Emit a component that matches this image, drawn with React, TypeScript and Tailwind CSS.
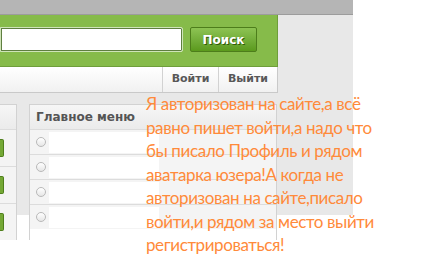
import React from 'react';

const lines = [
    'Я авторизован на сайте,а всё',
    'равно пишет войти,а надо что',
    'бы писало Профиль и рядом',
    'аватарка юзера!А когда не',
    'авторизован на сайте,писало',
    'войти,и рядом за место выйти',
    'регистрироваться!',
];

const MenuRow = () => (
    <div className="flex h-[25px] items-center border-t border-[#dcdcdc] bg-[#f4f4f4] pl-[6px]">
        <span className="h-[10px] w-[10px] shrink-0 rounded-full border border-[#b9b9b9] bg-gradient-to-b from-white to-[#e6e6e6]" />
        <span className="ml-[3px] h-[21px] w-[110px] bg-white" />
    </div>
);

const LeftRow = () => (
    <div className="flex h-[37px] items-center border-t border-[#dcdcdc] bg-[#f4f4f4]">
        <span className="h-[18px] w-[4px] rounded-r-[2px] border border-l-0 border-[#4f7f1c] bg-[#74a835]" />
    </div>
);

const App = () => {
    return (
        <div className="relative h-[265px] w-[421px] overflow-hidden bg-white font-['DejaVu_Sans',sans-serif]">
            <div className="flex h-[215px] w-[353px] flex-col bg-[#e8e8e8]">
                <div className="h-[15px] shrink-0 border-b border-[#9c9c9c] bg-[#b5b5b5]" />
                <div className="flex w-[278px] flex-col">
                    <div className="flex h-[52px] items-start border-r border-b border-[#6e9e3b] bg-[#86bb4a] pt-[12px]">
                        <div className="h-[25px] w-[183px] rounded-r-[2px] border border-[#cfe4b8] bg-white shadow-[inset_0_0_0_1px_#5f7f40]" />
                        <button className="ml-[7px] h-[25px] w-[67px] rounded-[2px] border border-[#4d7d1b] bg-gradient-to-b from-[#8dc353] to-[#5b9a1c] text-[12px] font-bold text-white [text-shadow:1px_1px_0_#2f5a0c]">
                            Поиск
                        </button>
                    </div>
                    <div className="flex h-[26px] border-r border-b border-[#c9c9c9] bg-gradient-to-b from-white to-[#f1f1f1] text-[11px] font-bold text-[#585858]">
                        <div className="w-[163px] border-r border-[#d2d2d2]" />
                        <div className="flex w-[56px] items-center justify-center border-r border-[#d2d2d2]">Войти</div>
                        <div className="flex flex-1 items-center justify-center">Выйти</div>
                    </div>
                </div>
                <div className="mt-[11px] flex">
                    <div className="w-[17px] border-r border-t border-[#d2d2d2]">
                        <div className="h-[24px] bg-gradient-to-b from-[#f6f6f6] to-[#ebebeb]" />
                        <LeftRow />
                        <LeftRow />
                        <LeftRow />
                    </div>
                    <div className="ml-[12px] w-[248px] border-l border-r border-t border-[#d2d2d2]">
                        <div className="flex h-[24px] items-center bg-gradient-to-b from-[#f6f6f6] to-[#ebebeb] pl-[6px] text-[12px] font-bold text-[#555]">
                            Главное меню
                        </div>
                        <MenuRow />
                        <MenuRow />
                        <MenuRow />
                        <MenuRow />
                    </div>
                </div>
            </div>
            <div className="absolute left-[146px] top-[92px] font-['Lato','Noto_Sans',sans-serif] text-[17px] leading-[23.5px] tracking-[-0.4px] text-[#ff8a3a]">
                {lines.map((l) => (
                    <div key={l} className="whitespace-nowrap">{l}</div>
                ))}
            </div>
        </div>
    );
};

export default App;
